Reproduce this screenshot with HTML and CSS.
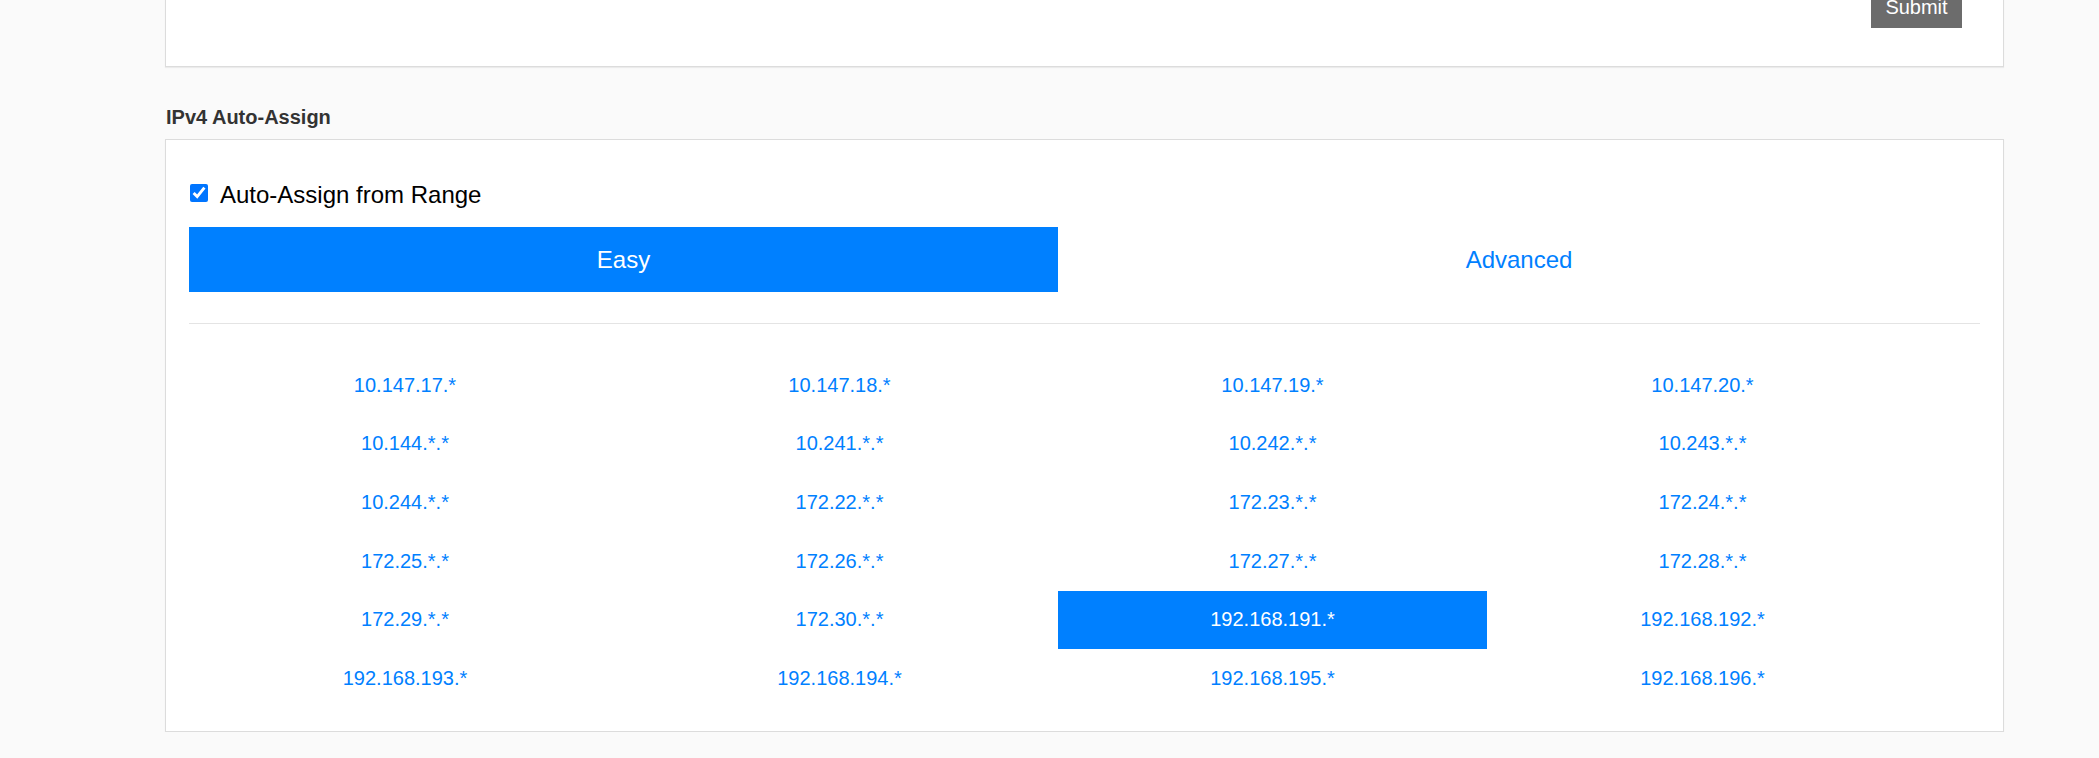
FILE: index.html
```html
<!DOCTYPE html>
<html lang="en">
<head>
<meta charset="utf-8">
<title>IPv4 Auto-Assign</title>
<link rel="stylesheet" href="styles.css">
</head>
<body>
<div class="page">
  <div class="card card-top">
    <button class="btn-submit" type="button">Submit</button>
  </div>

  <h3 class="section-title">IPv4 Auto-Assign</h3>

  <div class="card card-assign">
    <label class="check-row">
      <input type="checkbox" class="check" checked>
      <span>Auto-Assign from Range</span>
    </label>

    <div class="tabs">
      <div class="tab tab-active">Easy</div>
      <div class="tab">Advanced</div>
    </div>

    <hr class="divider">

    <div class="range-grid">
      <div class="cell">10.147.17.*</div>
      <div class="cell">10.147.18.*</div>
      <div class="cell">10.147.19.*</div>
      <div class="cell">10.147.20.*</div>
      <div class="cell">10.144.*.*</div>
      <div class="cell">10.241.*.*</div>
      <div class="cell">10.242.*.*</div>
      <div class="cell">10.243.*.*</div>
      <div class="cell">10.244.*.*</div>
      <div class="cell">172.22.*.*</div>
      <div class="cell">172.23.*.*</div>
      <div class="cell">172.24.*.*</div>
      <div class="cell">172.25.*.*</div>
      <div class="cell">172.26.*.*</div>
      <div class="cell">172.27.*.*</div>
      <div class="cell">172.28.*.*</div>
      <div class="cell">172.29.*.*</div>
      <div class="cell">172.30.*.*</div>
      <div class="cell cell-selected">192.168.191.*</div>
      <div class="cell">192.168.192.*</div>
      <div class="cell">192.168.193.*</div>
      <div class="cell">192.168.194.*</div>
      <div class="cell">192.168.195.*</div>
      <div class="cell">192.168.196.*</div>
    </div>
  </div>
</div>
</body>
</html>
```

FILE: styles.css
```css
html, body {
  margin: 0;
  padding: 0;
}

body {
  background: #fafafa;
  font-family: "Liberation Sans", Arial, Helvetica, sans-serif;
  color: #000;
  overflow: hidden;
}

.page {
  margin-top: -40px;
  margin-left: 165px;
  width: 1839px;
}

.card {
  box-sizing: border-box;
  background: #fff;
  border: 1px solid #dcdcdc;
  box-shadow: 0 1px 1px rgba(0, 0, 0, 0.06);
}

.card-top {
  display: flex;
  justify-content: flex-end;
  padding: 25px 41px 38px 23px;
}

.btn-submit {
  font-family: inherit;
  font-size: 20px;
  line-height: 30px;
  padding: 6px 14px;
  border: 0;
  border-radius: 0;
  background: #6c6c6c;
  color: #fff;
  width: 91px;
}

.section-title {
  margin: 35px 0 7px 1px;
  font-size: 20px;
  line-height: 30px;
  font-weight: bold;
  color: #333;
}

.card-assign {
  padding: 37px 23px 23px 23px;
}

.check-row {
  display: flex;
  align-items: center;
  height: 36px;
  font-size: 24px;
  line-height: 36px;
  margin-bottom: 14px;
}

.check {
  width: 18px;
  height: 18px;
  margin: 0 12px 0 1px;
  accent-color: #0075ff;
  position: relative;
  top: -2px;
}

.tabs {
  display: grid;
  grid-template-columns: 869px 1fr;
  height: 65px;
}

.tab {
  display: flex;
  align-items: center;
  justify-content: center;
  font-size: 24px;
  color: #0080ff;
  background: #fff;
}

.tab-active {
  background: #0080ff;
  color: #fff;
}

.divider {
  margin: 31px 0 32px 0;
  border: 0;
  border-top: 1px solid #e4e4e4;
  height: 0;
}

.range-grid {
  display: grid;
  grid-template-columns: 432px 437px 429px 431px;
  grid-auto-rows: 58.67px;
}

.cell {
  display: flex;
  align-items: center;
  justify-content: center;
  font-size: 20px;
  color: #0080ff;
}

.cell-selected {
  background: #0080ff;
  color: #fff;
}
```
